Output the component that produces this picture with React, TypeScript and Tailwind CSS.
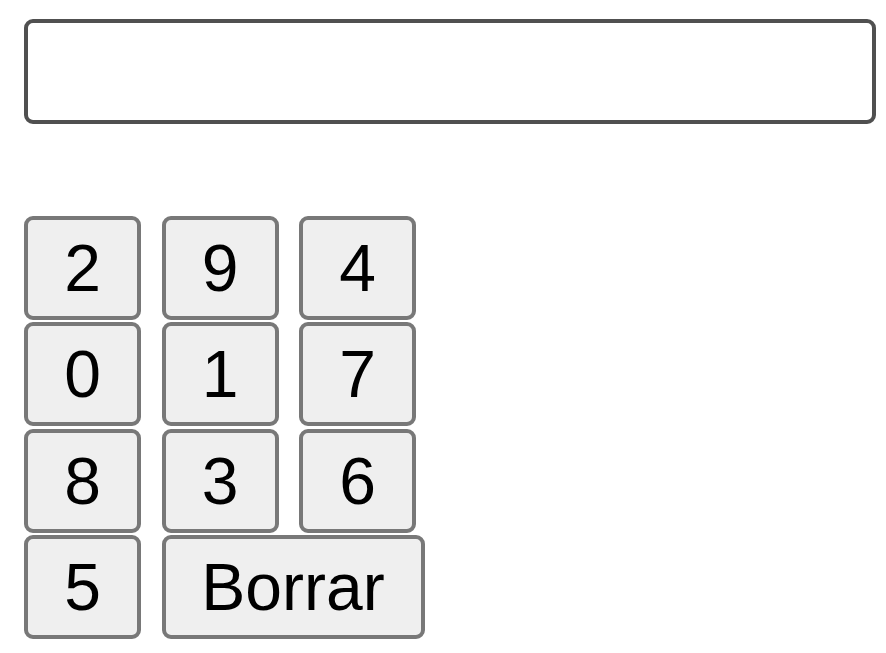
import React from "react";

const rows = [
  ["2", "9", "4"],
  ["0", "1", "7"],
  ["8", "3", "6"],
];

function Key({ label, wide }: { label: string; wide?: boolean }) {
  return (
    <button
      className={`${wide ? "w-[263px]" : "w-[117px]"} h-[104px] flex items-center justify-center rounded-[9px] border-[4.5px] border-[#787878] bg-[#efefef] text-black text-[66px] leading-none`}
      style={{ fontFamily: '"Liberation Sans", Arial, sans-serif' }}
    >
      {label}
    </button>
  );
}

export default function App() {
  return (
    <div className="min-h-[653px] w-[886px] bg-white pl-[24px] pr-[10px] pt-[19px]" style={{ fontFamily: '"Liberation Sans", Arial, sans-serif' }}>
      <input
        type="text"
        className="block w-[852px] h-[105px] rounded-[9px] border-4 border-[#505050] bg-white outline-none"
      />
      <div className="mt-[92px] flex flex-col gap-[2.33px]">
        {rows.map((r, i) => (
          <div key={i} className="flex gap-[20.5px]">
            {r.map((k) => (
              <Key key={k} label={k} />
            ))}
          </div>
        ))}
        <div className="flex gap-[20.5px]">
          <Key label="5" />
          <Key label="Borrar" wide />
        </div>
      </div>
    </div>
  );
}
